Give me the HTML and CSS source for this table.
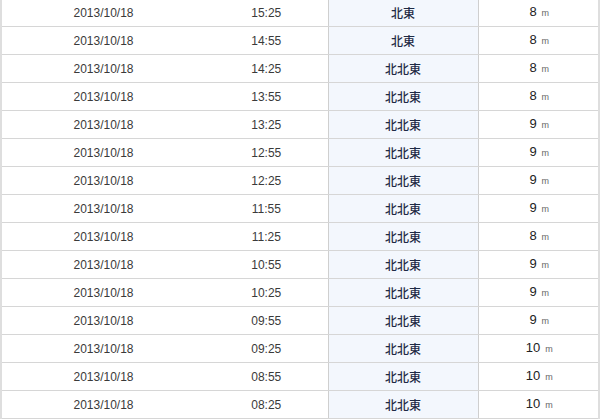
FILE: index.html
```html
<!DOCTYPE html>
<html lang="ja">
<head>
<meta charset="utf-8">
<link rel="stylesheet" href="styles.css">
</head>
<body>
<table class="tbl">
<colgroup><col class="c-date"><col class="c-time"><col class="c-dir"><col class="c-h"></colgroup>
<tbody>
<tr><td>2013/10/18</td><td>15:25</td><td class="dir">北東</td><td class="h">8<span class="u">m</span></td></tr>
<tr><td>2013/10/18</td><td>14:55</td><td class="dir">北東</td><td class="h">8<span class="u">m</span></td></tr>
<tr><td>2013/10/18</td><td>14:25</td><td class="dir">北北東</td><td class="h">8<span class="u">m</span></td></tr>
<tr><td>2013/10/18</td><td>13:55</td><td class="dir">北北東</td><td class="h">8<span class="u">m</span></td></tr>
<tr><td>2013/10/18</td><td>13:25</td><td class="dir">北北東</td><td class="h">9<span class="u">m</span></td></tr>
<tr><td>2013/10/18</td><td>12:55</td><td class="dir">北北東</td><td class="h">9<span class="u">m</span></td></tr>
<tr><td>2013/10/18</td><td>12:25</td><td class="dir">北北東</td><td class="h">9<span class="u">m</span></td></tr>
<tr><td>2013/10/18</td><td>11:55</td><td class="dir">北北東</td><td class="h">9<span class="u">m</span></td></tr>
<tr><td>2013/10/18</td><td>11:25</td><td class="dir">北北東</td><td class="h">8<span class="u">m</span></td></tr>
<tr><td>2013/10/18</td><td>10:55</td><td class="dir">北北東</td><td class="h">9<span class="u">m</span></td></tr>
<tr><td>2013/10/18</td><td>10:25</td><td class="dir">北北東</td><td class="h">9<span class="u">m</span></td></tr>
<tr><td>2013/10/18</td><td>09:55</td><td class="dir">北北東</td><td class="h">9<span class="u">m</span></td></tr>
<tr><td>2013/10/18</td><td>09:25</td><td class="dir">北北東</td><td class="h">10<span class="u">m</span></td></tr>
<tr><td>2013/10/18</td><td>08:55</td><td class="dir">北北東</td><td class="h">10<span class="u">m</span></td></tr>
<tr><td>2013/10/18</td><td>08:25</td><td class="dir">北北東</td><td class="h">10<span class="u">m</span></td></tr>
</tbody>
</table>
</body>
</html>
```

FILE: styles.css
```css
html, body {
  margin: 0;
  padding: 0;
  background: #ffffff;
}
body {
  font-family: "Liberation Sans", Arial, "Noto Sans CJK JP", sans-serif;
  font-size: 12px;
  color: #3a3a3a;
  overflow: hidden;
}
.tbl {
  border-collapse: collapse;
  table-layout: fixed;
  width: 598px;
  margin: -2px 0 0 0;
}
.c-date { width: 204px; }
.c-time { width: 123px; }
.c-dir { width: 150px; }
.c-h { width: 121px; }
.tbl td {
  height: 27px;
  padding: 0;
  text-align: center;
  vertical-align: middle;
  border-top: 1px solid #d6d6d6;
  border-bottom: 1px solid #d6d6d6;
  line-height: 14px;
}
.tbl td:first-child {
  border-left: 2px solid #dedede;
}
.tbl td:last-child {
  border-right: 2px solid #dedede;
}
.tbl td.dir {
  background: #f3f7fd;
  border-left: 1px solid #cfcfcf;
  border-right: 1px solid #cfcfcf;
  font-family: "Noto Sans CJK JP", sans-serif;
  font-weight: 500;
  color: #1e2a44;
  font-size: 12px;
}
.tbl td.h {
  font-size: 13px;
  font-weight: 400;
  color: #222222;
  padding-left: 2px;
}
.u {
  font-size: 9px;
  font-weight: 400;
  color: #666666;
  margin-left: 5px;
}
```
